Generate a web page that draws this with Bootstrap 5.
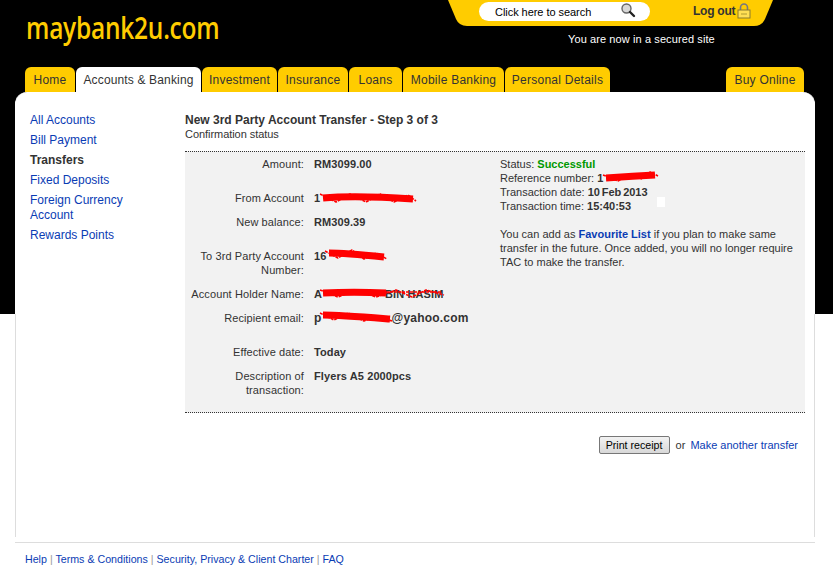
<!DOCTYPE html>
<html lang="en">
<head>
<meta charset="utf-8">
<title>maybank2u.com</title>
<link href="https://cdn.jsdelivr.net/npm/bootstrap@5.3.0/dist/css/bootstrap.min.css" rel="stylesheet">
<style>
html,body{height:586px;overflow:hidden}
body{font-family:"Liberation Sans",Arial,sans-serif;font-size:12px;line-height:14px;color:#333;background:linear-gradient(#000 314px,#fff 314px)}
a{color:#0a3cb4;text-decoration:none}
.topbar{height:67px;padding-left:26px}
.brand{width:422px;flex:none;overflow:hidden;font-family:"Open Sans",sans-serif;font-weight:600;font-size:31px;line-height:38px;color:#ffcc00;padding-top:8px}
.brand-text{display:inline-block;transform:scaleX(.79);transform-origin:left center;letter-spacing:-.3px}
.utility{position:relative;width:325px;height:26px}
.utility-shape{position:absolute;left:0;top:0}
.utility-inner{position:relative;height:26px;padding:2px 0 0 31px}
.search-pill{width:171px;height:19px;background:#fff;border-radius:10px;color:#000;padding:0 0 0 16px;font-size:11px;letter-spacing:-.05px;line-height:14px}
.search-pill svg{margin-left:29px;margin-top:-3px}
.logout{margin-left:43px;font-weight:700;color:#333;letter-spacing:-.25px;padding-top:2px}
.logout svg{margin-left:2px;margin-top:-1px}
.secure{color:#fff;margin-left:120px;padding-top:6px;font-size:11px;letter-spacing:.1px}
.tabs-row{height:25px;padding:0 29px 0 25px}
.tab-item{background:#ffcc00;color:#333;height:25px;line-height:26px;border-radius:6px 6px 0 0;margin-right:1px;text-align:center;letter-spacing:.25px}
.tab-item.active{background:#fff;letter-spacing:.15px}
.w-home{width:50px}.w-acc{width:125px}.w-inv{width:75px}.w-ins{width:70px}.w-loa{width:53px}.w-mob{width:101px}.w-per{width:105px}.w-buy{width:78px;margin-right:0}
.panel{position:relative;width:800px;height:445px;margin-left:15px;background:#fff;border-radius:12px 12px 0 0;border-left:1px solid #fff;border-right:1px solid #fff;padding:21px 9px 0 14px}
.panel::before{content:"";position:absolute;left:-1px;right:-1px;top:222px;bottom:0;border-left:1px solid #ddd;border-right:1px solid #ddd;pointer-events:none}
.sidenav{width:155px;flex:none;padding:0;margin:0;list-style:none}
.sidenav li{margin-bottom:5px;line-height:15px}
.sidenav li.current{font-weight:700;color:#333}
.heading{font-weight:700;line-height:14px}
.subheading{font-size:11px;letter-spacing:-.05px;line-height:15px;margin-bottom:9px}
.summary{position:relative;width:620px;height:262px;background:#f2f2f2;border-top:1px dotted #333;border-bottom:1px dotted #333;padding-top:5px;font-size:11px;letter-spacing:.1px}
.detail-left{width:315px;flex:none;margin:0;align-self:flex-start}
.detail-left td{padding:0 0 10px;vertical-align:top}
.detail-left tr.spaced td{padding-bottom:20px}
.lbl{width:129px;text-align:right;padding-right:10px!important}
.val{font-weight:700;position:relative}
.val-large{font-size:12px;letter-spacing:.2px}
.holder-tail{padding-left:63px}
.mail-tail{padding-left:70px}
.ok{color:#009900;font-weight:700}
.ref-wrap{position:relative;letter-spacing:0}
.note{margin:14px 0 0}
.date-val{word-spacing:-1px;letter-spacing:-.05px}
.actions{margin-top:23px;margin-right:7px;color:#333;font-size:11px}
.print-btn{font-family:"Liberation Sans",Arial,sans-serif;font-size:10.67px;line-height:14px;color:#000;width:71px;height:18px;padding:0;border:1px solid #777;border-radius:2px;background:linear-gradient(#f2f2f2,#d8d8d8);margin-right:6px}
.more-link{margin-left:5px}
.redact{position:absolute;left:0;top:0;pointer-events:none}
.redact-ref{top:13px}
.footline{width:800px;margin:5px 0 0 15px;border-top:1px solid #ddd;padding:9px 0 0 10px;font-size:10.67px;color:#999}
.white-speck{position:absolute;left:157px;top:40px;width:8px;height:10px;background:#fff}
.scrib{fill:none;stroke:#f00;stroke-linejoin:round}
</style>
</head>
<body>
<header class="topbar d-flex">
  <div class="brand"><span class="brand-text">maybank2u.com</span></div>
  <div>
    <div class="utility">
      <svg class="utility-shape" width="325" height="26" viewBox="0 0 325 26"><path d="M0 0H325L317 19Q314 26 306 26H19Q11 26 8 19Z" fill="#ffcc00"/></svg>
      <div class="utility-inner d-flex">
        <div class="search-pill d-flex align-items-center">Click here to search
          <svg width="16" height="16" viewBox="0 0 16 16"><circle cx="6.5" cy="6.5" r="4.5" fill="#d8d8d8" stroke="#666" stroke-width="1.4"/><path d="M10 10l4 4" stroke="#222" stroke-width="2.4" stroke-linecap="round"/></svg>
        </div>
        <div class="logout d-flex">Log out
          <svg width="14" height="16" viewBox="0 0 14 16"><path d="M3.5 7V4.5a3.5 3.5 0 0 1 7 0V7" fill="none" stroke="#77777f" stroke-width="1.6"/><rect x="1" y="7" width="12" height="8" fill="#ffdf55" stroke="#8a7a30"/><path d="M4 11h6" stroke="#b09a30"/></svg>
        </div>
      </div>
    </div>
    <div class="secure">You are now in a secured site</div>
  </div>
</header>
<nav class="tabs-row d-flex">
  <div class="tab-item w-home">Home</div>
  <div class="tab-item w-acc active">Accounts &amp; Banking</div>
  <div class="tab-item w-inv">Investment</div>
  <div class="tab-item w-ins">Insurance</div>
  <div class="tab-item w-loa">Loans</div>
  <div class="tab-item w-mob">Mobile Banking</div>
  <div class="tab-item w-per">Personal Details</div>
  <div class="tab-item w-buy ms-auto">Buy Online</div>
</nav>
<main class="panel d-flex">
  <ul class="sidenav">
    <li><a href="#">All Accounts</a></li>
    <li><a href="#">Bill Payment</a></li>
    <li class="current">Transfers</li>
    <li><a href="#">Fixed Deposits</a></li>
    <li><a href="#">Foreign Currency<br>Account</a></li>
    <li><a href="#">Rewards Points</a></li>
  </ul>
  <div>
    <div class="heading">New 3rd Party Account Transfer - Step 3 of 3</div>
    <div class="subheading">Confirmation status</div>
    <div class="summary d-flex">
      <table class="detail-left">
        <tr class="spaced"><td class="lbl">Amount:</td><td class="val">RM3099.00</td></tr>
        <tr><td class="lbl">From Account</td><td class="val">1<svg class="redact" width="110" height="14" viewBox="0 0 110 14"><path class="scrib" stroke-width="7" d="M9 7C30 5 70 6 99 8"/><path class="scrib" stroke-width="1.6" stroke-dasharray="3 1" d="M6 3L22 11L36 3L52 11L66 3L80 11L94 4L102 10"/></svg></td></tr>
        <tr class="spaced"><td class="lbl">New balance:</td><td class="val">RM309.39</td></tr>
        <tr><td class="lbl">To 3rd Party Account Number:</td><td class="val">16<svg class="redact" width="80" height="14" viewBox="0 0 80 14"><path class="scrib" stroke-width="7" d="M15 4C30 4 50 6 70 8"/><path class="scrib" stroke-width="1.6" stroke-dasharray="3 1" d="M11 2L24 9L38 1L50 10L62 4L73 10"/></svg></td></tr>
        <tr><td class="lbl">Account Holder Name:</td><td class="val">A<span class="holder-tail">BIN HASIM</span><svg class="redact" width="135" height="14" viewBox="0 0 135 14"><path class="scrib" stroke-width="7" d="M9 6C30 5 50 5 72 6"/><path class="scrib" stroke-width="1.6" stroke-dasharray="3 1" d="M6 3L24 10L42 3L62 10L82 3L98 10L112 3L130 8M72 5H128"/></svg></td></tr>
        <tr class="spaced"><td class="lbl">Recipient email:</td><td class="val val-large">p<span class="mail-tail">@yahoo.com</span><svg class="redact" width="90" height="14" viewBox="0 0 90 14"><path class="scrib" stroke-width="7" d="M9 4C25 4 50 6 76 8"/><path class="scrib" stroke-width="1.6" stroke-dasharray="3 1" d="M6 2L20 9L34 2L50 10L62 5L78 10"/></svg></td></tr>
        <tr><td class="lbl">Effective date:</td><td class="val">Today</td></tr>
        <tr><td class="lbl">Description of transaction:</td><td class="val">Flyers A5 2000pcs</td></tr>
      </table>
      <div class="ref-wrap flex-grow-1">
        <div>Status: <span class="ok">Successful</span></div>
        <div>Reference number: <b>1</b></div>
        <svg class="redact redact-ref" width="180" height="14" viewBox="0 0 180 14"><path class="scrib" stroke-width="7" d="M106 8C120 7 140 6 155 5"/><path class="scrib" stroke-width="1.6" stroke-dasharray="3 1" d="M103 5L118 11L130 4L142 9L150 2L158 6"/></svg>
        <div>Transaction date: <b class="date-val">10 Feb 2013</b></div>
        <div>Transaction time: <b>15:40:53</b></div>
        <div class="white-speck"></div>
        <p class="note">You can add as <a href="#"><b>Favourite List</b></a> if you plan to make same transfer in the future. Once added, you will no longer require TAC to make the transfer.</p>
      </div>
    </div>
    <div class="actions d-flex justify-content-end align-items-center">
      <button type="button" class="print-btn">Print receipt</button><span>or</span><a href="#" class="more-link">Make another transfer</a>
    </div>
  </div>
</main>
<footer class="footline"><a href="#">Help</a> | <a href="#">Terms &amp; Conditions</a> | <a href="#">Security, Privacy &amp; Client Charter</a> | <a href="#">FAQ</a></footer>
</body>
</html>
